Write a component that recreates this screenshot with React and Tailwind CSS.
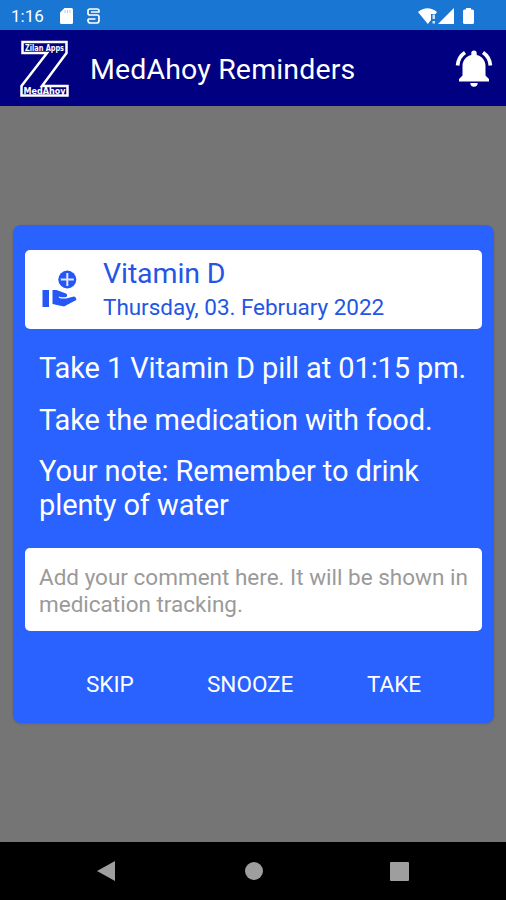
// Z shaped app logo with the two name plates
const AppLogo = () => (
  <svg width="50" height="58" viewBox="0 0 50 58" fill="none" className="overflow-visible">
    <path
      d="M2.500 3H46.500V14L22 47H47.500V56.500H1.500V47L27 14H2.500Z"
      stroke="#fff"
      strokeWidth="2.500"
    />
    <path d="M2 14H28M22 47H48" stroke="#fff" strokeWidth="1.500" />
    <text x="24.500" y="11.500" textAnchor="middle" fontSize="8.500" fontWeight="700" fontFamily="DejaVu Sans, sans-serif" fill="#fff" textLength="39" lengthAdjust="spacingAndGlyphs">
      Zilan Apps
    </text>
    <text x="24.500" y="55" textAnchor="middle" fontSize="9" fontWeight="700" fontFamily="DejaVu Sans, sans-serif" fill="#fff" textLength="42" lengthAdjust="spacingAndGlyphs">
      MedAhoy
    </text>
  </svg>
);

const BellIcon = () => (
  <svg width="38" height="38" viewBox="0 0 38 38" fill="#fff">
    <path d="M16.300 5V3.200A2.700 2.700 0 0 1 21.700 3.200V5C27 6.300 30.500 10.500 30.500 16V25.500L34 29V31.500H4V29L7.500 25.500V16C7.500 10.500 11 6.300 16.300 5Z" />
    <path d="M15.300 33H22.700A3.700 3.700 0 0 1 15.300 33Z" />
    <path d="M10 2.500Q3.200 7 2.600 15.500M28 2.500Q34.800 7 35.400 15.500" fill="none" stroke="#fff" strokeWidth="3.700" />
  </svg>
);

const MedicationIcon = () => (
  <svg width="36" height="40" viewBox="0 0 36 40" className="mb-[2px] shrink-0">
    <circle cx="25.300" cy="10.500" r="9" fill="#2457f5" />
    <path d="M25.300 4V17M18.800 10.500H31.800" stroke="#dfe6ff" strokeWidth="2" />
    <rect x="0.500" y="21" width="6.500" height="17" fill="#2457f5" />
    <path
      d="M10.500 21H14.500L24 24.500Q25.800 25.500 25 27.300Q24.400 28.300 22.500 28.300H19L17 27.500L16.700 28.500L19 29.500H24L32 27.500Q34.500 28 34.300 31L22 37.500L10.500 35Z"
      fill="#2457f5"
    />
  </svg>
);

const StatusBar = () => (
  <div className="flex h-[30px] items-center bg-[#1976d2] pt-[2px] pl-[11px] pr-[32px] text-white">
    <span className="w-[49px] text-[17px] leading-none">1:16</span>
    <svg width="13" height="16" viewBox="0 0 13 16">
      <path d="M4.500 0H11.500Q13 0 13 1.500V14.500Q13 16 11.500 16H1.500Q0 16 0 14.500V4.500Z" fill="#fff" />
      <path d="M5 2V5M7.500 2V5M10 2V5" stroke="#a9cff2" strokeWidth="1" />
    </svg>
    <svg width="13" height="16" viewBox="0 0 13 16" className="ml-[14px]" fill="none" stroke="#fff" strokeWidth="1.700">
      <path d="M12 4.500V3Q12 1 10 1H3Q1 1 1 3V5.500Q1 7 3 7H10Q12 7 12 9V12.500Q12 15 9.500 15H3.500Q1 15 1 12.500V11" />
      <path d="M4 4H12M1 11H8.500" strokeWidth="1.400" />
    </svg>
    <div className="ml-auto flex items-center">
      <svg width="37" height="17" viewBox="0 0 37 17" fill="#fff">
        <path d="M0 4Q9.500 -3.500 19 4L17.500 6H13V12L9.800 16Z" />
        <path d="M14.500 6.500H17V11H14.500ZM14.500 13H17V15.500H14.500Z" opacity="0.8" />
        <path d="M36 0V16H20Z" />
      </svg>
      <svg width="11" height="16" viewBox="0 0 11 16" className="ml-[8px]" fill="#fff">
        <path d="M3 0H8V1.500H9.500Q11 1.500 11 3V14.500Q11 16 9.500 16H1.500Q0 16 0 14.500V3Q0 1.500 1.500 1.500H3Z" />
      </svg>
    </div>
  </div>
);

const Header = () => (
  <header className="flex h-[76px] items-center bg-[#000080] pl-5 pr-[13px] text-white">
    <AppLogo />
    <h1 className="ml-5 pt-1 text-[28.5px] leading-[34px] tracking-[0.15px]">MedAhoy Reminders</h1>
    <div className="ml-auto pt-[2px]">
      <BellIcon />
    </div>
  </header>
);

const ReminderDialog = () => (
  <div className="mx-3 mt-[119px] ml-[13px] flex h-[498px] flex-col rounded-lg bg-[#2962ff] px-3 pt-[25px] text-white shadow-sm">
    <div className="flex h-[79px] shrink-0 items-center rounded-[5px] bg-white pl-[17px] text-[#2455e4]">
      <MedicationIcon />
      <div className="mb-[2px] ml-[25px]">
        <h2 className="text-[28.5px] leading-[34px] tracking-[-0.1px]">Vitamin D</h2>
        <p className="mt-[2px] text-[22.5px] leading-[28px] tracking-[-0.04px]">Thursday, 03. February 2022</p>
      </div>
    </div>

    <div className="mt-[22px] flex flex-col gap-[17.5px] pl-[14px] text-[29px] leading-[34px] tracking-[-0.1px] whitespace-nowrap">
      <p>Take 1 Vitamin D pill at 01:15 pm.</p>
      <p>Take the medication with food.</p>
      <p>
        Your note: Remember to drink
        <br />
        plenty of water
      </p>
    </div>

    <div className="mt-[26px] h-[83px] shrink-0 rounded-[5px] bg-white px-[14px] pt-[16px] text-[22.5px] leading-[26.5px] whitespace-nowrap text-[#9a9a9a]">
      Add your comment here. It will be shown in
      <br />
      medication tracking.
    </div>

    <div className="mt-[38px] flex text-[22.5px] leading-[30px]">
      <button className="ml-[61px] w-[121px] text-left">SKIP</button>
      <button className="w-[160px] text-left">SNOOZE</button>
      <button className="text-left">TAKE</button>
    </div>
  </div>
);

const NavigationBar = () => (
  <div className="flex h-[58px] items-center bg-black pl-[97px] text-[#9e9e9e]">
    <svg width="18" height="20" viewBox="0 0 18 20" fill="currentColor">
      <path d="M18 0V20L0 10Z" />
    </svg>
    <div className="ml-[130px] size-[18px] rounded-full bg-[#9e9e9e]"></div>
    <div className="ml-[127px] size-[19px] rounded-[1px] bg-[#9e9e9e]"></div>
  </div>
);

function App() {
  return (
    <div className="flex h-[900px] w-[506px] flex-col overflow-hidden bg-[#757575] font-['Roboto',sans-serif]">
      <StatusBar />
      <Header />
      <main className="flex-1">
        <div className="flow-root">
          <ReminderDialog />
        </div>
      </main>
      <NavigationBar />
    </div>
  );
}

export default App;
